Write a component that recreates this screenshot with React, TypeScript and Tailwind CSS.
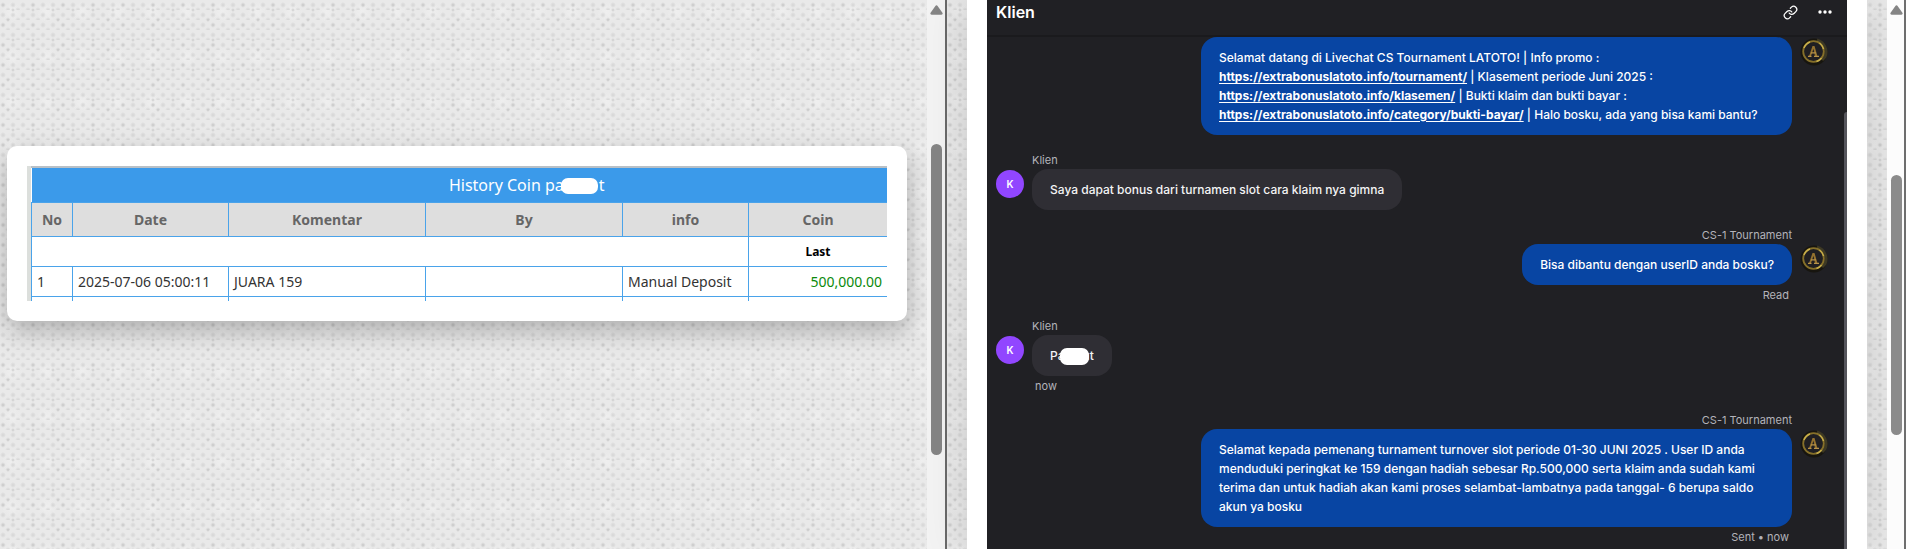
import React from 'react';
import { FiLink } from 'react-icons/fi';

// woven paper look: soft grey dots on grids of different sizes, so they don't line up
const paper =
  "bg-[#e9e9e9] bg-[radial-gradient(circle_at_3px_5px,#c8c8c8_0px,transparent_2px),radial-gradient(circle_at_13px_10px,#cacaca_0px,transparent_2px),radial-gradient(circle_at_8px_20px,#c6c6c6_0px,transparent_2px),radial-gradient(circle_at_3px_5px,#d4d4d4_0px,transparent_3px),radial-gradient(circle_at_8px_10px,#d4d4d4_0px,transparent_3px),radial-gradient(circle_at_12px_12px,#efefef_0px,transparent_10px)] bg-[length:30px_20px,20px_30px,50px_30px,10px_10px,10px_10px,35px_45px]";

interface ScrollbarProps {
  thumb: string;
  track: string;
}

const Scrollbar: React.FC<ScrollbarProps> = ({ thumb, track }) => (
  <div className={`relative shrink-0 ${track}`}>
    <svg className="absolute left-[3px] top-[5px]" width="13" height="10" viewBox="0 0 13 10" fill="#858585">
      <path d="M5.4.9a1.3 1.3 0 0 1 2.2 0l4.800 6.900c.6.9.1 2-1 2H1.600c-1.100 0-1.600-1.100-1-2z" />
    </svg>
    <div className={`absolute left-[4px] w-[11px] rounded-full ${thumb}`} />
  </div>
);

const Mask: React.FC<{ className: string }> = ({ className }) => (
  <span className={`absolute rounded-[7px] bg-white ${className}`} />
);

const HistoryTable = () => {
  const head = ['No', 'Date', 'Komentar', 'By', 'info', 'Coin'];
  const cell = 'border-l border-[#4aa3ea] px-[5px] pt-px';

  return (
    <div className="h-[135px] overflow-hidden bg-[#dcdfdc] pl-1">
      <div className="h-[2px] bg-[#b9c0c6]" />
      <table className="w-full table-fixed border-collapse bg-white font-['Noto_Sans',sans-serif] text-sm text-[#333]">
        <colgroup>
          <col className="w-[41px]" />
          <col className="w-[156px]" />
          <col className="w-[197px]" />
          <col className="w-[197px]" />
          <col className="w-[126px]" />
          <col />
        </colgroup>
        <thead>
          <tr className="h-[34px] bg-[#3b9aea] text-base text-white">
            <th colSpan={6} className="py-0 pl-[135px] pr-0 font-normal">
              <span className="relative">
                History Coin pa
                <span className="inline-block w-[35px]" />
                t
                <Mask className="right-[7px] top-[4px] h-[16px] w-[37px]" />
              </span>
            </th>
          </tr>
          <tr className="h-[34px] border-y border-[#4aa3ea] bg-[#dedede] text-[#666]">
            {head.map((name) => (
              <th key={name} className={`${cell} font-bold`}>{name}</th>
            ))}
          </tr>
        </thead>
        <tbody>
          <tr className="h-[30px] border-b border-[#4aa3ea]">
            <td colSpan={5} className={cell} />
            <td className={`${cell} text-center text-xs font-bold text-black`}>Last</td>
          </tr>
          <tr className="h-[30px] border-b border-[#4aa3ea]">
            <td className={cell}>1</td>
            <td className={cell}>2025-07-06 05:00:11</td>
            <td className={cell}>JUARA 159</td>
            <td className={cell} />
            <td className={cell}>Manual Deposit</td>
            <td className={`${cell} text-right text-[#0b8a0b]`}>500,000.00</td>
          </tr>
          <tr className="h-[30px]">
            {head.map((name) => (
              <td key={name} className={cell} />
            ))}
          </tr>
        </tbody>
      </table>
    </div>
  );
};

const AgentAvatar = () => (
  <svg className="mt-px shrink-0" width="28" height="28" viewBox="0 0 28 28" fill="none">
    <circle cx="14" cy="14" r="13.500" fill="#17150f" />
    <path d="M17 2a12.500 12.500 0 0 1 8 17l-3 3" stroke="#3d3925" strokeWidth="3" />
    <circle cx="13.500" cy="13.500" r="10.300" fill="#201f22" stroke="#86702a" strokeWidth="1.800" />
    <path d="M4 10a10.300 10.300 0 0 1 6-6M19.500 5a10.300 10.300 0 0 1 4 6M21.500 20a10.300 10.300 0 0 1-5 3.500" stroke="#c9b04c" strokeWidth="1.400" />
    <path d="M12.500 8h2l3 10.300h-2.500l-1.500-7.500-2.600 7.500H9z" fill="#94722f" />
    <path d="M11 14.800h5M8 18.300h3.500M14 18.300h5" stroke="#b8934a" strokeWidth="1.200" />
  </svg>
);

interface MessageProps {
  children: React.ReactNode;
  name?: string;
  status?: string;
}

const Caption: React.FC<{ className?: string; children?: React.ReactNode }> = ({ className = '', children }) => (
  <div className={`h-[17px] text-[11px] font-normal text-[#b3b3ba] ${className}`}>{children}</div>
);

const ClientMessage: React.FC<MessageProps> = ({ children, name, status }) => (
  <div className="flex gap-2 pl-[9px]">
    <div className="mt-[18px] flex size-7 shrink-0 items-center justify-center rounded-full bg-[#9146ff] text-[10px] font-semibold text-white">
      K
    </div>
    <div className="flex flex-col items-start">
      <Caption className="leading-4">{name}</Caption>
      <div className="rounded-2xl bg-[#2f2e34] px-[18px] py-[11px] text-[#f4f4f5]">{children}</div>
      <Caption className="px-[3px] pt-[3px] leading-[14px]">{status}</Caption>
    </div>
  </div>
);

const AgentMessage: React.FC<MessageProps> = ({ children, name, status }) => (
  <div className="flex justify-end gap-2 pr-[19px]">
    <div className="flex flex-col items-end">
      {name && <Caption className="leading-4">{name}</Caption>}
      <div className="max-w-[591px] rounded-2xl bg-[#0845a3] px-[18px] py-[11px] text-white">{children}</div>
      {status && <Caption className="pr-[3px] pt-[3px] leading-[14px]">{status}</Caption>}
    </div>
    <div className={name ? 'pt-[17px]' : ''}>
      <AgentAvatar />
    </div>
  </div>
);

const ChatLink: React.FC<{ path: string }> = ({ path }) => {
  const url = `https://extrabonuslatoto.info/${path}/`;
  return <a href={url} className="whitespace-nowrap font-bold underline underline-offset-2">{url}</a>;
};

const Chat = () => (
  <div className="relative h-full overflow-hidden bg-[#202024] font-['Inter',sans-serif] text-xs font-medium leading-[19px]">
    <header className="flex h-[37px] items-start justify-between border-b-2 border-[#1a1a1d] pl-[9px] pr-[15px] text-white">
      <h1 className="text-base font-semibold leading-6">Klien</h1>
      <div className="flex h-6 items-center gap-5">
        <button aria-label="Copy link"><FiLink size={15} /></button>
        <button aria-label="More">
          <svg width="14" height="14" viewBox="0 0 14 14" fill="currentColor">
            <circle cx="2" cy="7" r="1.700" />
            <circle cx="7" cy="7" r="1.700" />
            <circle cx="12" cy="7" r="1.700" />
          </svg>
        </button>
      </div>
    </header>
    <div className="flex flex-col">
      <AgentMessage>
        Selamat datang di Livechat CS Tournament LATOTO! | Info promo :{' '}
        <ChatLink path="tournament" /> | Klasement periode Juni 2025 :{' '}
        <ChatLink path="klasemen" /> | Bukti klaim dan bukti bayar :{' '}
        <ChatLink path="category/bukti-bayar" /> | Halo bosku, ada yang bisa kami bantu?
      </AgentMessage>
      <div className="mt-[17px]">
        <ClientMessage name="Klien">Saya dapat bonus dari turnamen slot cara klaim nya gimna</ClientMessage>
      </div>
      <AgentMessage name="CS-1 Tournament" status="Read">Bisa dibantu dengan userID anda bosku?</AgentMessage>
      <div className="mt-4">
        <ClientMessage name="Klien" status="now">
          <span className="relative">
            Pa
            <span className="inline-block w-[18px]" />
            ut
            <Mask className="right-[5px] top-0 h-[17px] w-[29px]" />
          </span>
        </ClientMessage>
      </div>
      <div className="mt-[19px]">
        <AgentMessage name="CS-1 Tournament" status="Sent • now">
          Selamat kepada pemenang turnament turnover slot periode 01-30 JUNI 2025 . User ID anda menduduki peringkat ke 159 dengan hadiah sebesar Rp.500,000 serta klaim anda sudah kami terima dan untuk hadiah akan kami proses selambat-lambatnya pada tanggal- 6 berupa saldo akun ya bosku
        </AgentMessage>
      </div>
    </div>
    <div className="absolute bottom-0 right-0 top-[112px] w-[3px] rounded-tl-full bg-[#55555c]" />
  </div>
);

const App = () => (
  <main className="grid h-screen grid-cols-[947fr_959fr] overflow-hidden">
    <section className={`flex border-r-2 border-[#6a6a6a] ${paper}`}>
      <div className="flex min-w-0 flex-1 flex-col overflow-hidden pl-[7px] pr-5 pt-[146px]">
        <div className="rounded-[10px] bg-white p-5 shadow-[0_10px_25px_rgba(0,0,0,0.25)]">
          <HistoryTable />
        </div>
      </div>
      <Scrollbar track="w-[18px] bg-[#f3f3f3]" thumb="top-[144px] h-[311px] bg-[#858585]" />
    </section>
    <section className={`flex border-r-2 border-[#6f6f6f] ${paper}`}>
      <div className="min-w-0 flex-1 px-5">
        <div className="relative h-full bg-white px-5 shadow-[0_0_40px_rgba(0,0,0,0.15)]">
          <Chat />
        </div>
      </div>
      <Scrollbar track="w-[17px] bg-[#fcfcfc]" thumb="top-[175px] h-[260px] bg-[#8b8b8b]" />
    </section>
  </main>
);

export default App;
